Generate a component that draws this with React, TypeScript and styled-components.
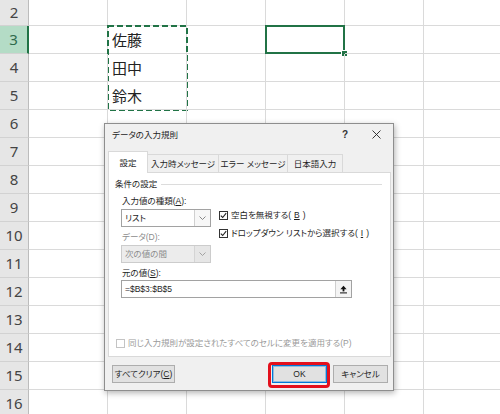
import styled, { createGlobalStyle } from 'styled-components';

const GlobalStyle = createGlobalStyle`
  html, body { margin: 0; padding: 0; background: #fff; }
  body { width: 500px; height: 414px; overflow: hidden; text-autospace: no-autospace; }
`;

const GREEN = '#217346';

const Page = styled.div`
  position: relative;
  width: 500px;
  height: 414px;
  overflow: hidden;
  background: #fff;
`;

// worksheet: row header column + six data columns, rows 2..16
const Sheet = styled.div`
  display: grid;
  grid-template-columns: 29px repeat(6, 79px);
  grid-template-rows: 26px repeat(14, 28px);
`;

const RowHead = styled.div<{ $r: number; $active?: boolean }>`
  grid-row: ${(p) => p.$r};
  grid-column: 1;
  display: flex;
  align-items: center;
  justify-content: center;
  box-sizing: border-box;
  background: ${(p) => (p.$active ? '#b4dcc6' : '#e6e6e6')};
  border-right: ${(p) => (p.$active ? `2px solid ${GREEN}` : '1px solid #bcbcbc')};
  border-bottom: 1px solid #d2d2d2;
  color: ${(p) => (p.$active ? '#2f6a4c' : '#444')};
  font: 400 15px/1 'Noto Sans', sans-serif;
`;

const Cell = styled.div<{ $r: number; $c: number }>`
  grid-row: ${(p) => p.$r};
  grid-column: ${(p) => p.$c};
  position: relative;
  display: flex;
  align-items: center;
  padding-left: 4px;
  box-sizing: border-box;
  border-right: 1px solid #dadada;
  border-bottom: 1px solid #dadada;
  color: #222;
  font: 400 15px/1 'Noto Sans CJK JP', sans-serif;
`;

// copy marquee around B3:B5
const Marquee = styled.svg`
  position: absolute;
  left: -1px;
  top: -1px;
  pointer-events: none;
`;

// active cell frame with the fill handle
const ActiveFrame = styled.div`
  position: absolute;
  inset: -1px;
  border: 2px solid ${GREEN};
`;

const FillHandle = styled.div`
  position: absolute;
  right: -5px;
  bottom: -5px;
  width: 5px;
  height: 5px;
  background: ${GREEN};
  border: 1px solid #fff;
`;

const Dialog = styled.div`
  position: absolute;
  left: 104px;
  top: 123px;
  width: 290px;
  box-sizing: border-box;
  background: #f0f0f0;
  border: 1px solid #8e8e8e;
  box-shadow: 1px 2px 6px rgba(0, 0, 0, 0.3);
  color: #1e1e1e;
  font: 400 8.5px/12px 'Liberation Sans', 'Noto Sans CJK JP', sans-serif;
  font-feature-settings: 'palt';
  text-autospace: no-autospace;
  padding-bottom: 7px;
`;

const TitleBar = styled.div`
  display: flex;
  align-items: center;
  height: 21px;
  padding-left: 7px;
`;

const Title = styled.div`
  flex: 1;
`;

const TitleButton = styled.div<{ $w: number }>`
  width: ${(p) => p.$w}px;
  height: 21px;
  display: flex;
  align-items: center;
  justify-content: center;
  font: 700 10px/1 'Liberation Sans', sans-serif;
  color: #333;
`;

const Body = styled.div`
  padding: 6px 2px 0 3px;
`;

const TabStrip = styled.div`
  position: relative;
  z-index: 1;
  display: flex;
  align-items: flex-end;
  height: 22px;
  margin-bottom: -1px;
`;

const Tab = styled.div<{ $w: number; $selected?: boolean }>`
  width: ${(p) => p.$w}px;
  height: ${(p) => (p.$selected ? 22 : 19)}px;
  box-sizing: border-box;
  margin-right: -1px;
  display: flex;
  align-items: center;
  justify-content: center;
  background: ${(p) => (p.$selected ? '#fff' : '#f0f0f0')};
  border: 1px solid #d9d9d9;
  border-bottom: ${(p) => (p.$selected ? 'none' : '1px solid #d9d9d9')};
  white-space: nowrap;
`;

const Panel = styled.div`
  height: 185px;
  box-sizing: border-box;
  display: flex;
  flex-direction: column;
  background: #fff;
  border: 1px solid #d9d9d9;
  padding: 5px 8px 7px 6px;
`;

const GroupTitle = styled.div`
  display: flex;
  align-items: center;
  gap: 4px;
  &::after {
    content: '';
    flex: 1;
    height: 1px;
    background: #dcdcdc;
  }
`;

const Fields = styled.div`
  display: grid;
  grid-template-columns: 90px auto;
  column-gap: 8px;
  margin-top: 5px;
  padding-left: 6px;
`;

const FieldLabel = styled.div<{ $disabled?: boolean }>`
  grid-column: 1;
  padding-left: 1px;
  margin-bottom: 2px;
  color: ${(p) => (p.$disabled ? '#8d8d8d' : '#1e1e1e')};
  white-space: nowrap;
`;

const Combo = styled.div<{ $disabled?: boolean }>`
  grid-column: 1;
  display: flex;
  height: 18px;
  box-sizing: border-box;
  margin-bottom: 4px;
  background: ${(p) => (p.$disabled ? '#ececec' : '#fff')};
  border: 1px solid ${(p) => (p.$disabled ? '#cccccc' : '#a2a2a2')};
  color: ${(p) => (p.$disabled ? '#8d8d8d' : '#1e1e1e')};
`;

const ComboText = styled.div`
  flex: 1;
  display: flex;
  align-items: center;
  padding-left: 3px;
`;

const ComboArrow = styled.div<{ $disabled?: boolean }>`
  width: 15px;
  display: flex;
  align-items: center;
  justify-content: center;
  border-left: 1px solid ${(p) => (p.$disabled ? '#d4d4d4' : '#d0d0d0')};
  background: ${(p) => (p.$disabled ? '#e6e6e6' : '#f7f7f7')};
`;

const Checks = styled.div`
  grid-column: 2;
  grid-row: 2 / span 3;
  align-self: start;
  display: flex;
  flex-direction: column;
  gap: 6px;
`;

const CheckRow = styled.div<{ $disabled?: boolean }>`
  display: flex;
  align-items: center;
  gap: 3px;
  height: 12px;
  white-space: nowrap;
  color: ${(p) => (p.$disabled ? '#9a9a9a' : '#1e1e1e')};
`;

const Box = styled.div<{ $disabled?: boolean }>`
  width: 9px;
  height: 9px;
  box-sizing: border-box;
  display: flex;
  background: #fff;
  border: 1px solid ${(p) => (p.$disabled ? '#c4c4c4' : '#333')};
`;

const RefInput = styled.div`
  display: flex;
  width: 231px;
  height: 18px;
  box-sizing: border-box;
  margin-left: 6px;
  background: #fff;
  border: 1px solid #a2a2a2;
`;

const RefButton = styled.div`
  width: 15px;
  display: flex;
  align-items: center;
  justify-content: center;
  border-left: 1px solid #cfcfcf;
  background: #f4f4f4;
`;

const SourceLabel = styled(FieldLabel)`
  padding-left: 7px;
  margin-bottom: 1px;
`;

const ApplyAll = styled(CheckRow)`
  margin-top: auto;
  margin-left: 1px;
`;

const Footer = styled.div`
  display: flex;
  justify-content: space-between;
  padding: 8px 3px 0 4px;
`;

const ButtonGroup = styled.div`
  display: flex;
  gap: 6px;
`;

const Button = styled.div<{ $w: number; $default?: boolean }>`
  position: relative;
  width: ${(p) => p.$w}px;
  height: 18px;
  box-sizing: border-box;
  display: flex;
  align-items: center;
  justify-content: center;
  background: #e1e1e1;
  border: 1px solid ${(p) => (p.$default ? '#0078d7' : '#adadad')};
  box-shadow: ${(p) => (p.$default ? 'inset 0 0 0 1px rgba(0, 120, 215, 0.35)' : 'none')};
  white-space: nowrap;
`;

// red callout drawn around the OK button
const Highlight = styled.div`
  position: absolute;
  top: -4px;
  bottom: -6px;
  left: -5px;
  right: -4px;
  border: 3px solid #e3101c;
  border-radius: 4px;
  pointer-events: none;
`;

const Chevron = ({ color = '#7a7a7a' }: { color?: string }) => (
  <svg width="7" height="4" viewBox="0 0 7 4">
    <path d="M0.5 0.5 L3.5 3.5 L6.5 0.5" fill="none" stroke={color} strokeWidth="0.9" />
  </svg>
);

const Tick = () => (
  <svg width="7" height="7" viewBox="0 0 7 7">
    <path d="M0.8 3.6 L2.7 5.5 L6.2 1.2" fill="none" stroke="#222" strokeWidth="1.1" />
  </svg>
);

const CollapseIcon = () => (
  <svg width="9" height="9" viewBox="0 0 9 9">
    <path d="M4.5 0.8 L7.6 4.2 H1.4 Z" fill="#111" />
    <rect x="3.6" y="4" width="1.8" height="2.4" fill="#111" />
    <rect x="1" y="7.4" width="7" height="1" fill="#111" />
  </svg>
);

const CloseIcon = () => (
  <svg width="9" height="9" viewBox="0 0 9 9">
    <path d="M0.5 0.5 L8.5 8.5 M8.5 0.5 L0.5 8.5" stroke="#222" strokeWidth="0.9" />
  </svg>
);

const ROWS = Array.from({ length: 15 }, (_, i) => i + 2);
const VALUES: Record<string, string> = { '3-3': '佐藤', '4-3': '田中', '5-3': '鈴木' };

export default function App() {
  return (
    <Page>
      <GlobalStyle />
      <Sheet>
        {ROWS.map((row, ri) => [
          <RowHead key={`h${row}`} $r={ri + 1} $active={row === 3}>
            {row}
          </RowHead>,
          ...[2, 3, 4, 5, 6, 7].map((col) => (
            <Cell key={`${row}-${col}`} $r={ri + 1} $c={col}>
              {VALUES[`${row}-${col}`]}
              {row === 3 && col === 3 && (
                <Marquee width="81" height="86" viewBox="0 0 81 86">
                  <rect
                    x="1"
                    y="1"
                    width="79"
                    height="84"
                    fill="none"
                    stroke={GREEN}
                    strokeWidth="2"
                    strokeDasharray="6 3"
                  />
                </Marquee>
              )}
              {row === 3 && col === 5 && (
                <ActiveFrame>
                  <FillHandle />
                </ActiveFrame>
              )}
            </Cell>
          )),
        ])}
      </Sheet>

      <Dialog>
        <TitleBar>
          <Title>データの入力規則</Title>
          <TitleButton $w={30}>?</TitleButton>
          <TitleButton $w={33}>
            <CloseIcon />
          </TitleButton>
        </TitleBar>
        <Body>
          <TabStrip>
            <Tab $w={40} $selected>設定</Tab>
            <Tab $w={72}>入力時メッセージ</Tab>
            <Tab $w={70}>エラー メッセージ</Tab>
            <Tab $w={56}>日本語入力</Tab>
          </TabStrip>
          <Panel>
            <GroupTitle>条件の設定</GroupTitle>
            <Fields>
              <FieldLabel>
                入力値の種類(<u>A</u>):
              </FieldLabel>
              <Combo>
                <ComboText>リスト</ComboText>
                <ComboArrow>
                  <Chevron />
                </ComboArrow>
              </Combo>
              <FieldLabel $disabled>データ(D):</FieldLabel>
              <Combo $disabled>
                <ComboText>次の値の間</ComboText>
                <ComboArrow $disabled>
                  <Chevron color="#9a9a9a" />
                </ComboArrow>
              </Combo>
              <Checks>
                <CheckRow>
                  <Box>
                    <Tick />
                  </Box>
                  空白を無視する(<u>B</u>)
                </CheckRow>
                <CheckRow>
                  <Box>
                    <Tick />
                  </Box>
                  ドロップダウン リストから選択する(<u>I</u>)
                </CheckRow>
              </Checks>
            </Fields>
            <SourceLabel>
              元の値(<u>S</u>):
            </SourceLabel>
            <RefInput>
              <ComboText>=$B$3:$B$5</ComboText>
              <RefButton>
                <CollapseIcon />
              </RefButton>
            </RefInput>
            <ApplyAll $disabled>
              <Box $disabled />
              同じ入力規則が設定されたすべてのセルに変更を適用する(P)
            </ApplyAll>
          </Panel>
          <Footer>
            <Button $w={63}>
              すべてクリア(<u>C</u>)
            </Button>
            <ButtonGroup>
              <Button $w={55} $default>
                OK
                <Highlight />
              </Button>
              <Button $w={55}>キャンセル</Button>
            </ButtonGroup>
          </Footer>
        </Body>
      </Dialog>
    </Page>
  );
}
